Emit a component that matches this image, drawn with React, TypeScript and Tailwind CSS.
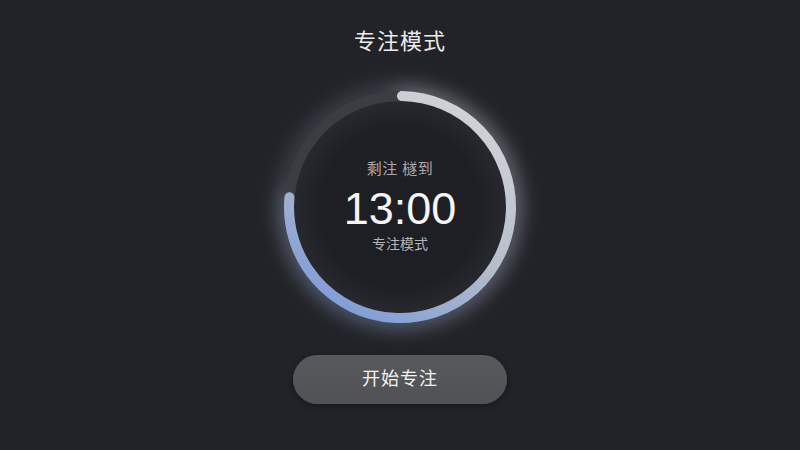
import React from 'react';

const CX = 130;
const CY = 130;
const R = 111;

// point on the ring, angle in degrees, 0 = 3 o'clock, clockwise
const pt = (deg: number) => {
  const a = (deg * Math.PI) / 180;
  return { x: CX + R * Math.cos(a), y: CY + R * Math.sin(a) };
};

function arcPath(from: number, to: number) {
  const s = pt(from);
  const e = pt(to);
  const large = to - from > 180 ? 1 : 0;
  return `M ${s.x} ${s.y} A ${R} ${R} 0 ${large} 1 ${e.x} ${e.y}`;
}

function TimerRing() {
  const start = -89;
  const end = 185;
  const progress = arcPath(start, end);
  const track = arcPath(end, 271.01);

  return (
    <svg width="260" height="260" viewBox="0 0 260 260" className="overflow-visible">
      <defs>
        <linearGradient id="ringGrad" gradientUnits="userSpaceOnUse" x1="200" y1="30" x2="70" y2="240">
          <stop offset="0" stopColor="#d0d2d6" />
          <stop offset="0.5" stopColor="#b6bdcb" />
          <stop offset="1" stopColor="#7e9cd8" />
        </linearGradient>
        <radialGradient id="innerGrad" cx="0.5" cy="0.5" r="0.5">
          <stop offset="0.75" stopColor="#1e1f24" />
          <stop offset="1" stopColor="#28292e" />
        </radialGradient>
        <filter id="glow" x="-40%" y="-40%" width="180%" height="180%">
          <feGaussianBlur stdDeviation="9" />
        </filter>
      </defs>

      {/* soft halo */}
      <circle cx={CX} cy={CY} r={R + 2} fill="none" stroke="#9aa6bd" strokeOpacity="0.2" strokeWidth="22" filter="url(#glow)" />
      <path d={progress} fill="none" stroke="url(#ringGrad)" strokeOpacity="0.3" strokeWidth="18" strokeLinecap="round" filter="url(#glow)" />

      <circle cx={CX} cy={CY} r={R - 5} fill="url(#innerGrad)" />

      <path d={track} fill="none" stroke="#3b3d42" strokeWidth="10" strokeLinecap="round" />
      <path d={progress} fill="none" stroke="url(#ringGrad)" strokeWidth="10" strokeLinecap="round" />
    </svg>
  );
}

export default function App() {
  return (
    <div
      className="w-[800px] h-[450px] bg-[#222328] flex flex-col items-center text-white"
      style={{ fontFamily: '"Liberation Sans", "Noto Sans CJK SC", sans-serif' }}
    >
      <h1 className="pt-[27px] text-[22px] leading-[30px] text-[#ececee] font-normal tracking-[1px]">专注模式</h1>

      <div className="relative mt-[20px] w-[260px] h-[260px]">
        <TimerRing />
        <div className="absolute inset-0 flex flex-col items-center justify-center">
          <div className="text-[15px] leading-[20px] text-[#a9aaae] -mt-[3px] tracking-[0.5px]">剩注 檖到</div>
          <div className="text-[45px] leading-[48px] text-[#f5f5f6] mt-[6px]">13:00</div>
          <div className="text-[14px] leading-[18px] text-[#b4b5b9] mt-[2px]">专注模式</div>
        </div>
      </div>

      <button className="mt-[18px] w-[214px] h-[49px] rounded-full bg-gradient-to-b from-[#58595d] to-[#505155] shadow-[0_2px_6px_rgba(0,0,0,0.35)] text-[18px] text-[#f2f2f3] tracking-[1px]">
        开始专注
      </button>
    </div>
  );
}
